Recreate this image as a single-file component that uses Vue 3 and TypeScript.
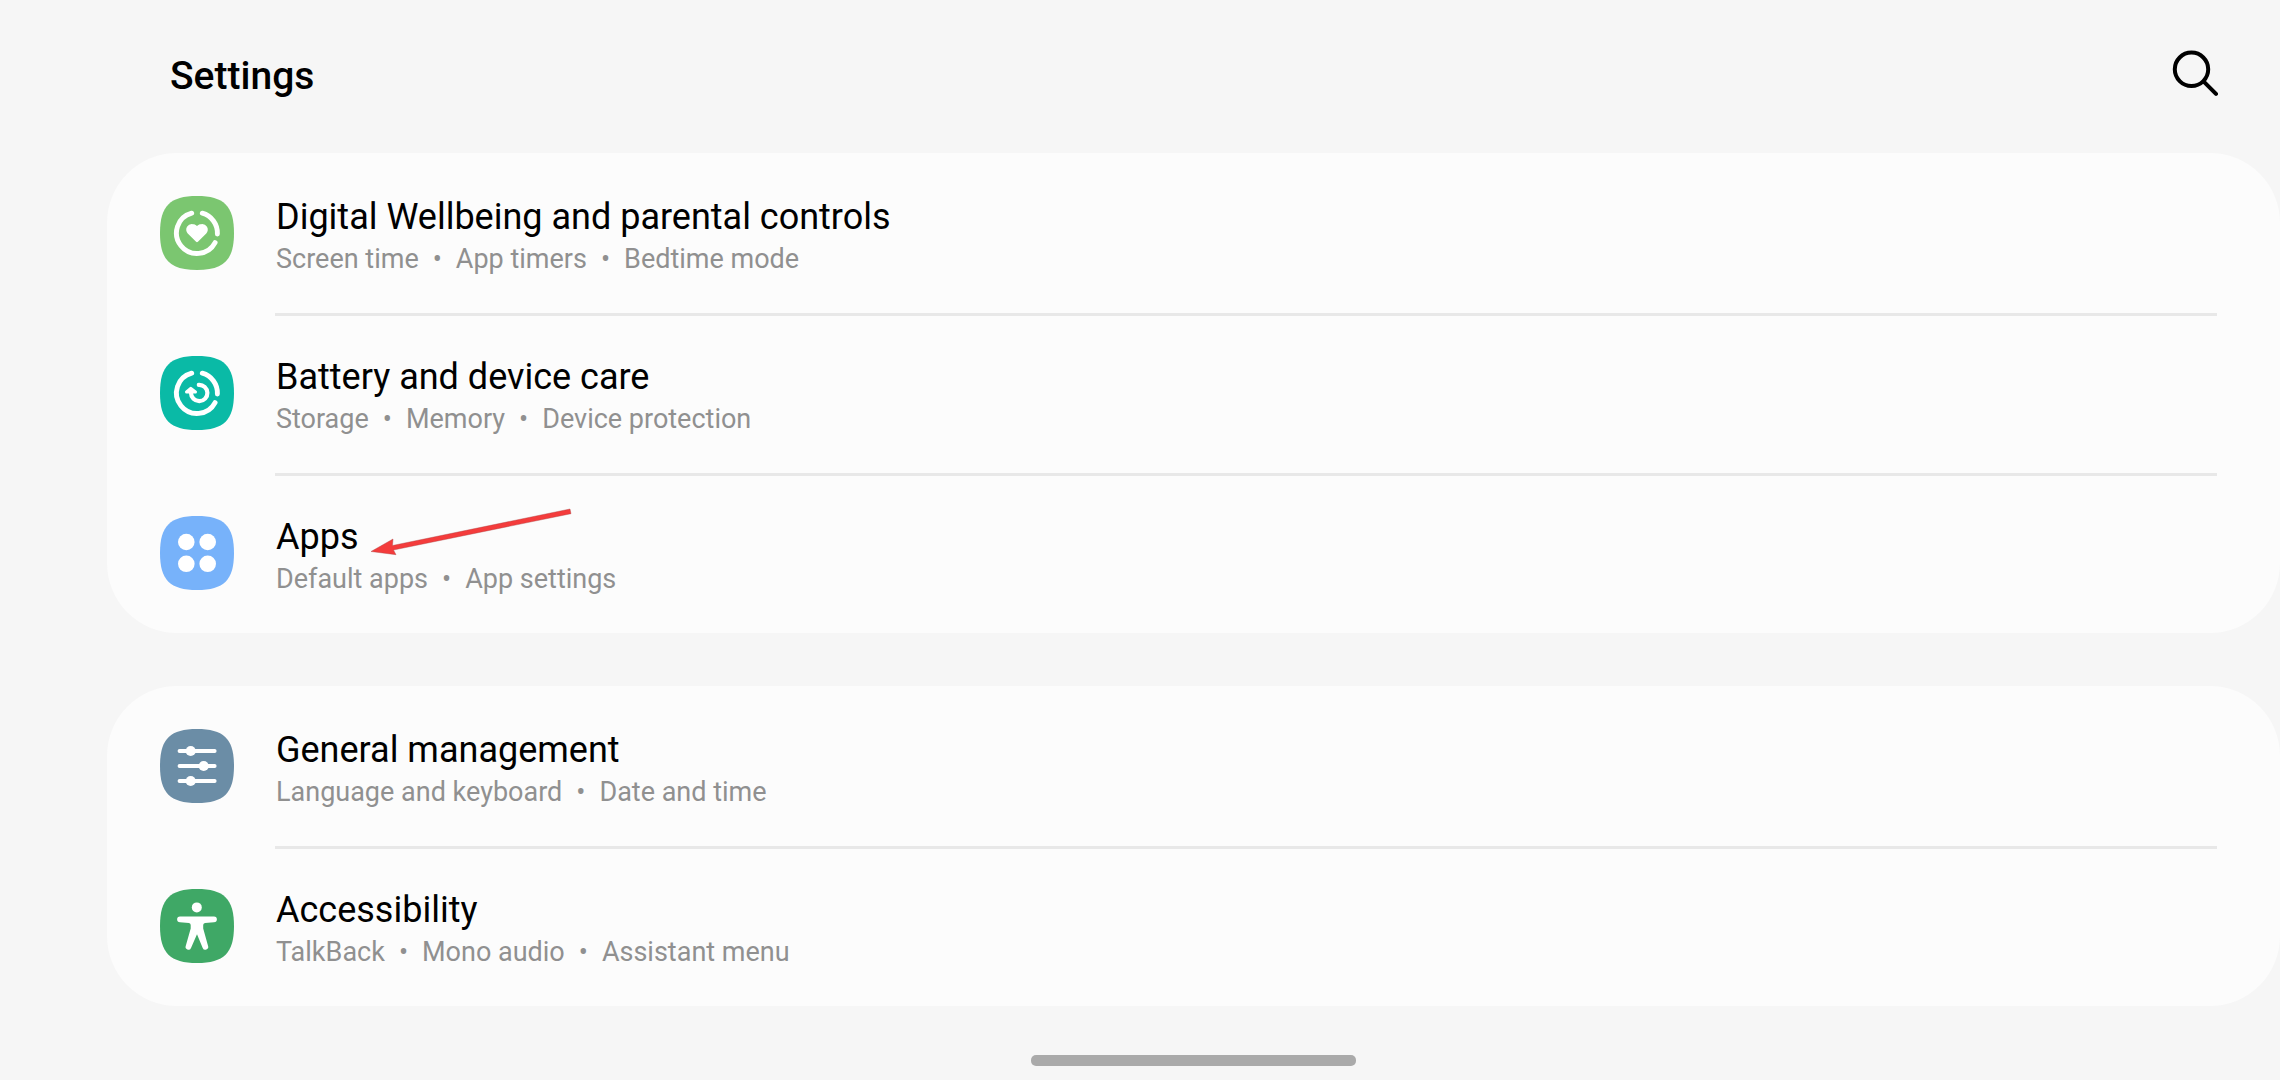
<script setup lang="ts">
type IconName = 'wellbeing' | 'care' | 'apps' | 'general' | 'accessibility'

interface SettingItem {
  title: string
  details: string[]
  icon: IconName
  color: string
  pointed?: boolean
}

const groups: SettingItem[][] = [
  [
    {
      title: 'Digital Wellbeing and parental controls',
      details: ['Screen time', 'App timers', 'Bedtime mode'],
      icon: 'wellbeing',
      color: '#7bc670',
    },
    {
      title: 'Battery and device care',
      details: ['Storage', 'Memory', 'Device protection'],
      icon: 'care',
      color: '#0abaa6',
    },
    {
      title: 'Apps',
      details: ['Default apps', 'App settings'],
      icon: 'apps',
      color: '#77b2fa',
      pointed: true,
    },
  ],
  [
    {
      title: 'General management',
      details: ['Language and keyboard', 'Date and time'],
      icon: 'general',
      color: '#6b8da6',
    },
    {
      title: 'Accessibility',
      details: ['TalkBack', 'Mono audio', 'Assistant menu'],
      icon: 'accessibility',
      color: '#3fa866',
    },
  ],
]
</script>

<template>
  <div class="screen">
    <header class="header">
      <h1 class="heading">Settings</h1>
      <button class="search" type="button" aria-label="Search">
        <svg viewBox="0 0 46 46" fill="none" stroke="#000" stroke-width="4" stroke-linecap="round">
          <circle cx="19.5" cy="19.3" r="16.7" />
          <path d="M32 31.8L44 43.8" />
        </svg>
      </button>
    </header>

    <main class="groups">
      <ul v-for="(group, index) in groups" :key="index" class="group">
        <li v-for="item in group" :key="item.title" class="item">
          <a class="row" href="#">
            <svg class="icon" viewBox="0 0 74 74" aria-hidden="true">
              <path
                d="M0 37C0 10 10 0 37 0S74 10 74 37 64 74 37 74 0 64 0 37Z"
                :fill="item.color"
              />
              <g
                v-if="item.icon === 'wellbeing' || item.icon === 'care'"
                fill="none"
                stroke="#fff"
                stroke-width="4.9"
                stroke-linecap="round"
                stroke-linejoin="round"
              >
                <path d="M31.7 17.2A20.5 20.5 0 1 0 55.1 46.6" />
                <path d="M42.3 17.2A20.5 20.5 0 0 1 57.4 38" />
                <g v-if="item.icon === 'care'" stroke-width="4.2">
                  <path d="M38.8 28.8A8.2 8.2 0 1 1 31 37V34.5" />
                  <path d="M26.6 36L30.8 32.4L35.4 36Z" fill="#fff" stroke-width="3.2" />
                </g>
                <path
                  v-else
                  d="M37 44.8L28.9 36.8C25.6 33 29 28.9 32.3 29.2C34.4 29.3 36 30.5 37 32.2C38 30.5 39.6 29.3 41.7 29.2C45 28.9 48.4 33 45.1 36.8Z"
                  fill="#fff"
                  stroke-width="2.6"
                />
              </g>
              <g v-else-if="item.icon === 'apps'" fill="#fff">
                <circle cx="26.3" cy="26" r="8.3" />
                <circle cx="47.7" cy="26" r="8.3" />
                <circle cx="26.3" cy="47.8" r="8.3" />
                <circle cx="47.7" cy="47.8" r="8.3" />
              </g>
              <g v-else-if="item.icon === 'general'" fill="#fff">
                <path
                  d="M19.5 22H54.7M19.5 37H54.7M19.5 52H54.7"
                  stroke="#fff"
                  stroke-width="3.8"
                  stroke-linecap="round"
                />
                <circle cx="30.7" cy="22" r="5.1" />
                <circle cx="43.7" cy="37" r="5.1" />
                <circle cx="30.7" cy="52" r="5.1" />
              </g>
              <g v-else fill="#fff">
                <circle cx="36.8" cy="18.4" r="5" />
                <path
                  d="M20 27.4H54A2.9 2.9 0 0 1 54 33.2L45 33.9Q43.2 34.1 43.2 36V39.5L48 56.8A2.8 2.8 0 0 1 42.7 58.9L37 45.3L31 58.9A2.8 2.8 0 0 1 25.8 56.8L30.7 39.5V36Q30.7 34.1 29 33.9L20 33.2A2.9 2.9 0 0 1 20 27.4Z"
                />
              </g>
            </svg>
            <span class="text">
              <span class="title">{{ item.title }}</span>
              <span class="details">
                <template v-for="(detail, position) in item.details" :key="detail">
                  <span v-if="position > 0">•</span>
                  <span>{{ detail }}</span>
                </template>
              </span>
            </span>
          </a>
          <svg v-if="item.pointed" class="arrow" viewBox="0 0 204 48" aria-hidden="true">
            <path
              d="M1 43.5L23 31L22.5 37.5L200 1L201 5.7L23.5 42L26 46.7Z"
              fill="#f43c3c"
              stroke="#a44"
              stroke-width="0.4"
            />
          </svg>
        </li>
      </ul>
    </main>

    <div class="home-bar"></div>
  </div>
</template>

<style>
body {
  margin: 0;
  background: #f6f6f6;
}
</style>

<style scoped>
.screen {
  display: flex;
  flex-direction: column;
  box-sizing: border-box;
  min-height: 100vh;
  padding: 0 0 14px 107px;
  background: #f6f6f6;
  color: #000;
  font-family: Roboto, "Liberation Sans", sans-serif;
}

.header {
  display: flex;
  align-items: flex-start;
  justify-content: space-between;
  box-sizing: border-box;
  height: 153px;
  padding: 50px 62px 0 63px;
}

.heading {
  margin: 0;
  font-size: 39px;
  font-weight: 500;
  line-height: 52px;
}

.search {
  width: 46px;
  height: 46px;
  padding: 0;
  border: 0;
  background: none;
}

.search svg {
  display: block;
}

.groups {
  display: flex;
  flex-direction: column;
  gap: 53px;
}

.group {
  margin: 0;
  padding: 0;
  border-radius: 70px;
  background: #fcfcfc;
  list-style: none;
}

.item {
  position: relative;
}

.row {
  display: flex;
  box-sizing: border-box;
  height: 160px;
  padding: 0 63px 0 53px;
  color: inherit;
  text-decoration: none;
}

.icon {
  flex: none;
  align-self: center;
  width: 74px;
  height: 74px;
  margin-right: 41px;
}

.text {
  display: flex;
  flex: 1;
  flex-direction: column;
  gap: 2px;
  box-sizing: border-box;
  padding: 39px 0 0 1px;
  border-top: 3px solid transparent;
}

.item + .item .text {
  border-top-color: #e8e8e8;
}

.title {
  font-size: 36px;
  line-height: 44px;
}

.details {
  display: flex;
  gap: 14px;
  color: #909090;
  font-size: 27px;
  line-height: 36px;
}

.arrow {
  position: absolute;
  top: 35px;
  left: 263px;
  width: 204px;
  height: 48px;
}

.home-bar {
  align-self: center;
  width: 325px;
  height: 11px;
  margin-top: auto;
  border-radius: 5px;
  background: #aaa;
}
</style>
